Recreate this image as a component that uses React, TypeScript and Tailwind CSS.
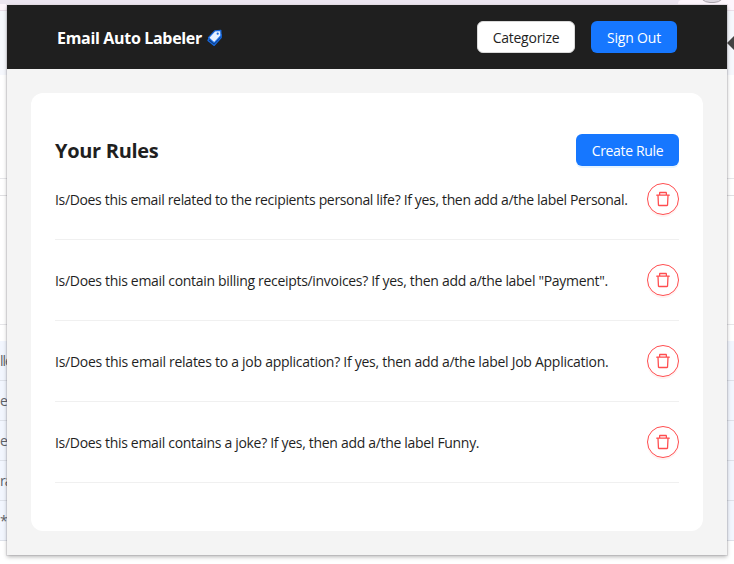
const rules = [
  { text: 'Is/Does this email related to the recipients personal life? If yes, then add a/the label Personal.', tracking: 'tracking-[-0.34px]' },
  { text: 'Is/Does this email contain billing receipts/invoices? If yes, then add a/the label "Payment".', tracking: 'tracking-[-0.31px]' },
  { text: 'Is/Does this email relates to a job application? If yes, then add a/the label Job Application.', tracking: 'tracking-[-0.27px]' },
  { text: 'Is/Does this email contains a joke? If yes, then add a/the label Funny.', tracking: 'tracking-[-0.31px]' },
];

const mailRows = ['lle', 'e', 'er', 'ra', '**'];

function TrashIcon() {
  return (
    <svg viewBox="64 64 896 896" className="size-4" fill="currentColor" aria-hidden="true">
      <path d="M360 184h-8c4.4 0 8-3.6 8-8v8h304v-8c0 4.4 3.6 8 8 8h-8v72h72v-80c0-35.3-28.7-64-64-64H352c-35.3 0-64 28.7-64 64v80h72v-72zm504 72H160c-17.7 0-32 14.3-32 32v32c0 4.4 3.6 8 8 8h60.4l24.7 523c1.6 34.1 29.8 61 63.9 61h454c34.2 0 62.3-26.8 63.9-61l24.7-523H888c4.4 0 8-3.6 8-8v-32c0-17.7-14.3-32-32-32zM731.3 840H292.7l-24.2-512h487l-24.2 512z" />
    </svg>
  );
}

function TagIcon() {
  return (
    <svg viewBox="0 0 16 18" className="mt-0.5 h-[18px] w-4" aria-hidden="true">
      <path d="M2 9.5 L1 11.4 L7.2 16.4 L14.2 8.6 L14 5" fill="#11315f" stroke="#1769e0" strokeWidth="1.3" strokeLinejoin="round" />
      <path d="M1.5 8.8 L7.8 1.9 L13.8 1.3 L14 6.7 L7.2 13.9 Z" fill="#e8f2ff" stroke="#1769e0" strokeWidth="1.3" strokeLinejoin="round" />
      <circle cx="10.7" cy="4.7" r="1.1" fill="#1769e0" />
    </svg>
  );
}

function MailBackdrop() {
  return (
    <div className="flex h-full flex-col" aria-hidden="true">
      <div className="flex h-1 shrink-0 justify-between bg-[#ece5f0]">
        <div />
        <div className="flex h-1 w-[56px] justify-center overflow-hidden rounded-tl-lg bg-[#fdf5fc]">
          <div className="-mt-[21px] ml-3 h-6 w-7 shrink-0 rounded-full border border-[#aaa4ac] bg-[#dcd6df]" />
        </div>
      </div>
      <div className="h-[7px] shrink-0 border-b border-[#eadfea] bg-[#fdf5fc]" />
      <div className="flex h-16 shrink-0 items-center justify-end bg-[#f6f8fd]">
        <div className="h-0 w-0 border-y-[7px] border-r-[7px] border-y-transparent border-r-[#444]" />
      </div>
      <div className="h-[104px] shrink-0 border-b border-[#e6e6e9]" />
      <div className="h-[17px] shrink-0 border-b border-[#e0e0e3]" />
      <div className="h-[129px] shrink-0 border-b border-[#e6e6e9]" />
      <div className="h-4 shrink-0" />
      {mailRows.map((text) => (
        <div key={text} className="flex h-10 w-full shrink-0 items-center border-b border-[#dde1e9] bg-[#f2f6fe]">
          <span className="text-sm tracking-[-1px] text-[#5f6368]">{text}</span>
        </div>
      ))}
    </div>
  );
}

export default function App() {
  return (
    <div className="relative h-[564px] w-[734px] overflow-hidden bg-white font-['Open_Sans','Noto_Sans',sans-serif] text-[#1f1f1f]">
      <MailBackdrop />
      <div className="absolute top-[5px] left-[7px] flex h-[550px] w-[720px] flex-col bg-[#f4f4f4] shadow-[0_0_0_1px_rgba(90,80,100,0.12),0_2px_4px_rgba(0,0,0,0.28)]">
        <header className="flex h-16 shrink-0 items-center justify-between bg-[#1f1f1f] px-[50px]">
          <div className="flex items-center gap-[5px]">
            <h1 className="pt-[2px] text-[16px] leading-6 font-bold tracking-[-0.32px] whitespace-nowrap text-white">Email Auto Labeler</h1>
            <TagIcon />
          </div>
          <div className="flex gap-4">
            <button className="h-8 w-[98px] rounded-md border border-[#d9d9d9] bg-white text-[14px] tracking-[-0.25px]">Categorize</button>
            <button className="h-8 w-[86px] rounded-md bg-[#1677ff] text-[14px] tracking-[-0.2px] text-white">Sign Out</button>
          </div>
        </header>
        <main className="m-6 flex grow flex-col rounded-xl bg-white px-6 pt-[41px]">
          <div className="flex h-8 shrink-0 items-center justify-between">
            <h2 className="pt-px text-[20px] leading-8 font-bold tracking-[-0.3px]">Your Rules</h2>
            <button className="h-8 w-[103px] rounded-md bg-[#1677ff] text-[14px] tracking-[-0.35px] text-white shadow-[0_2px_0_rgba(5,145,255,0.1)]">Create Rule</button>
          </div>
          <ul className="-mt-[7px]">
            {rules.map((rule) => (
              <li key={rule.text} className="flex h-[81px] items-center justify-between border-b border-[#f0f0f0]">
                <span className={`pt-[2px] text-[14px] leading-[22px] whitespace-nowrap ${rule.tracking}`}>{rule.text}</span>
                <button className="flex size-8 shrink-0 items-center justify-center rounded-full border border-[#ff4d4f] text-[#ff4d4f] shadow-[0_2px_0_rgba(255,38,5,0.06)]" aria-label="Delete rule">
                  <TrashIcon />
                </button>
              </li>
            ))}
          </ul>
        </main>
      </div>
    </div>
  );
}
